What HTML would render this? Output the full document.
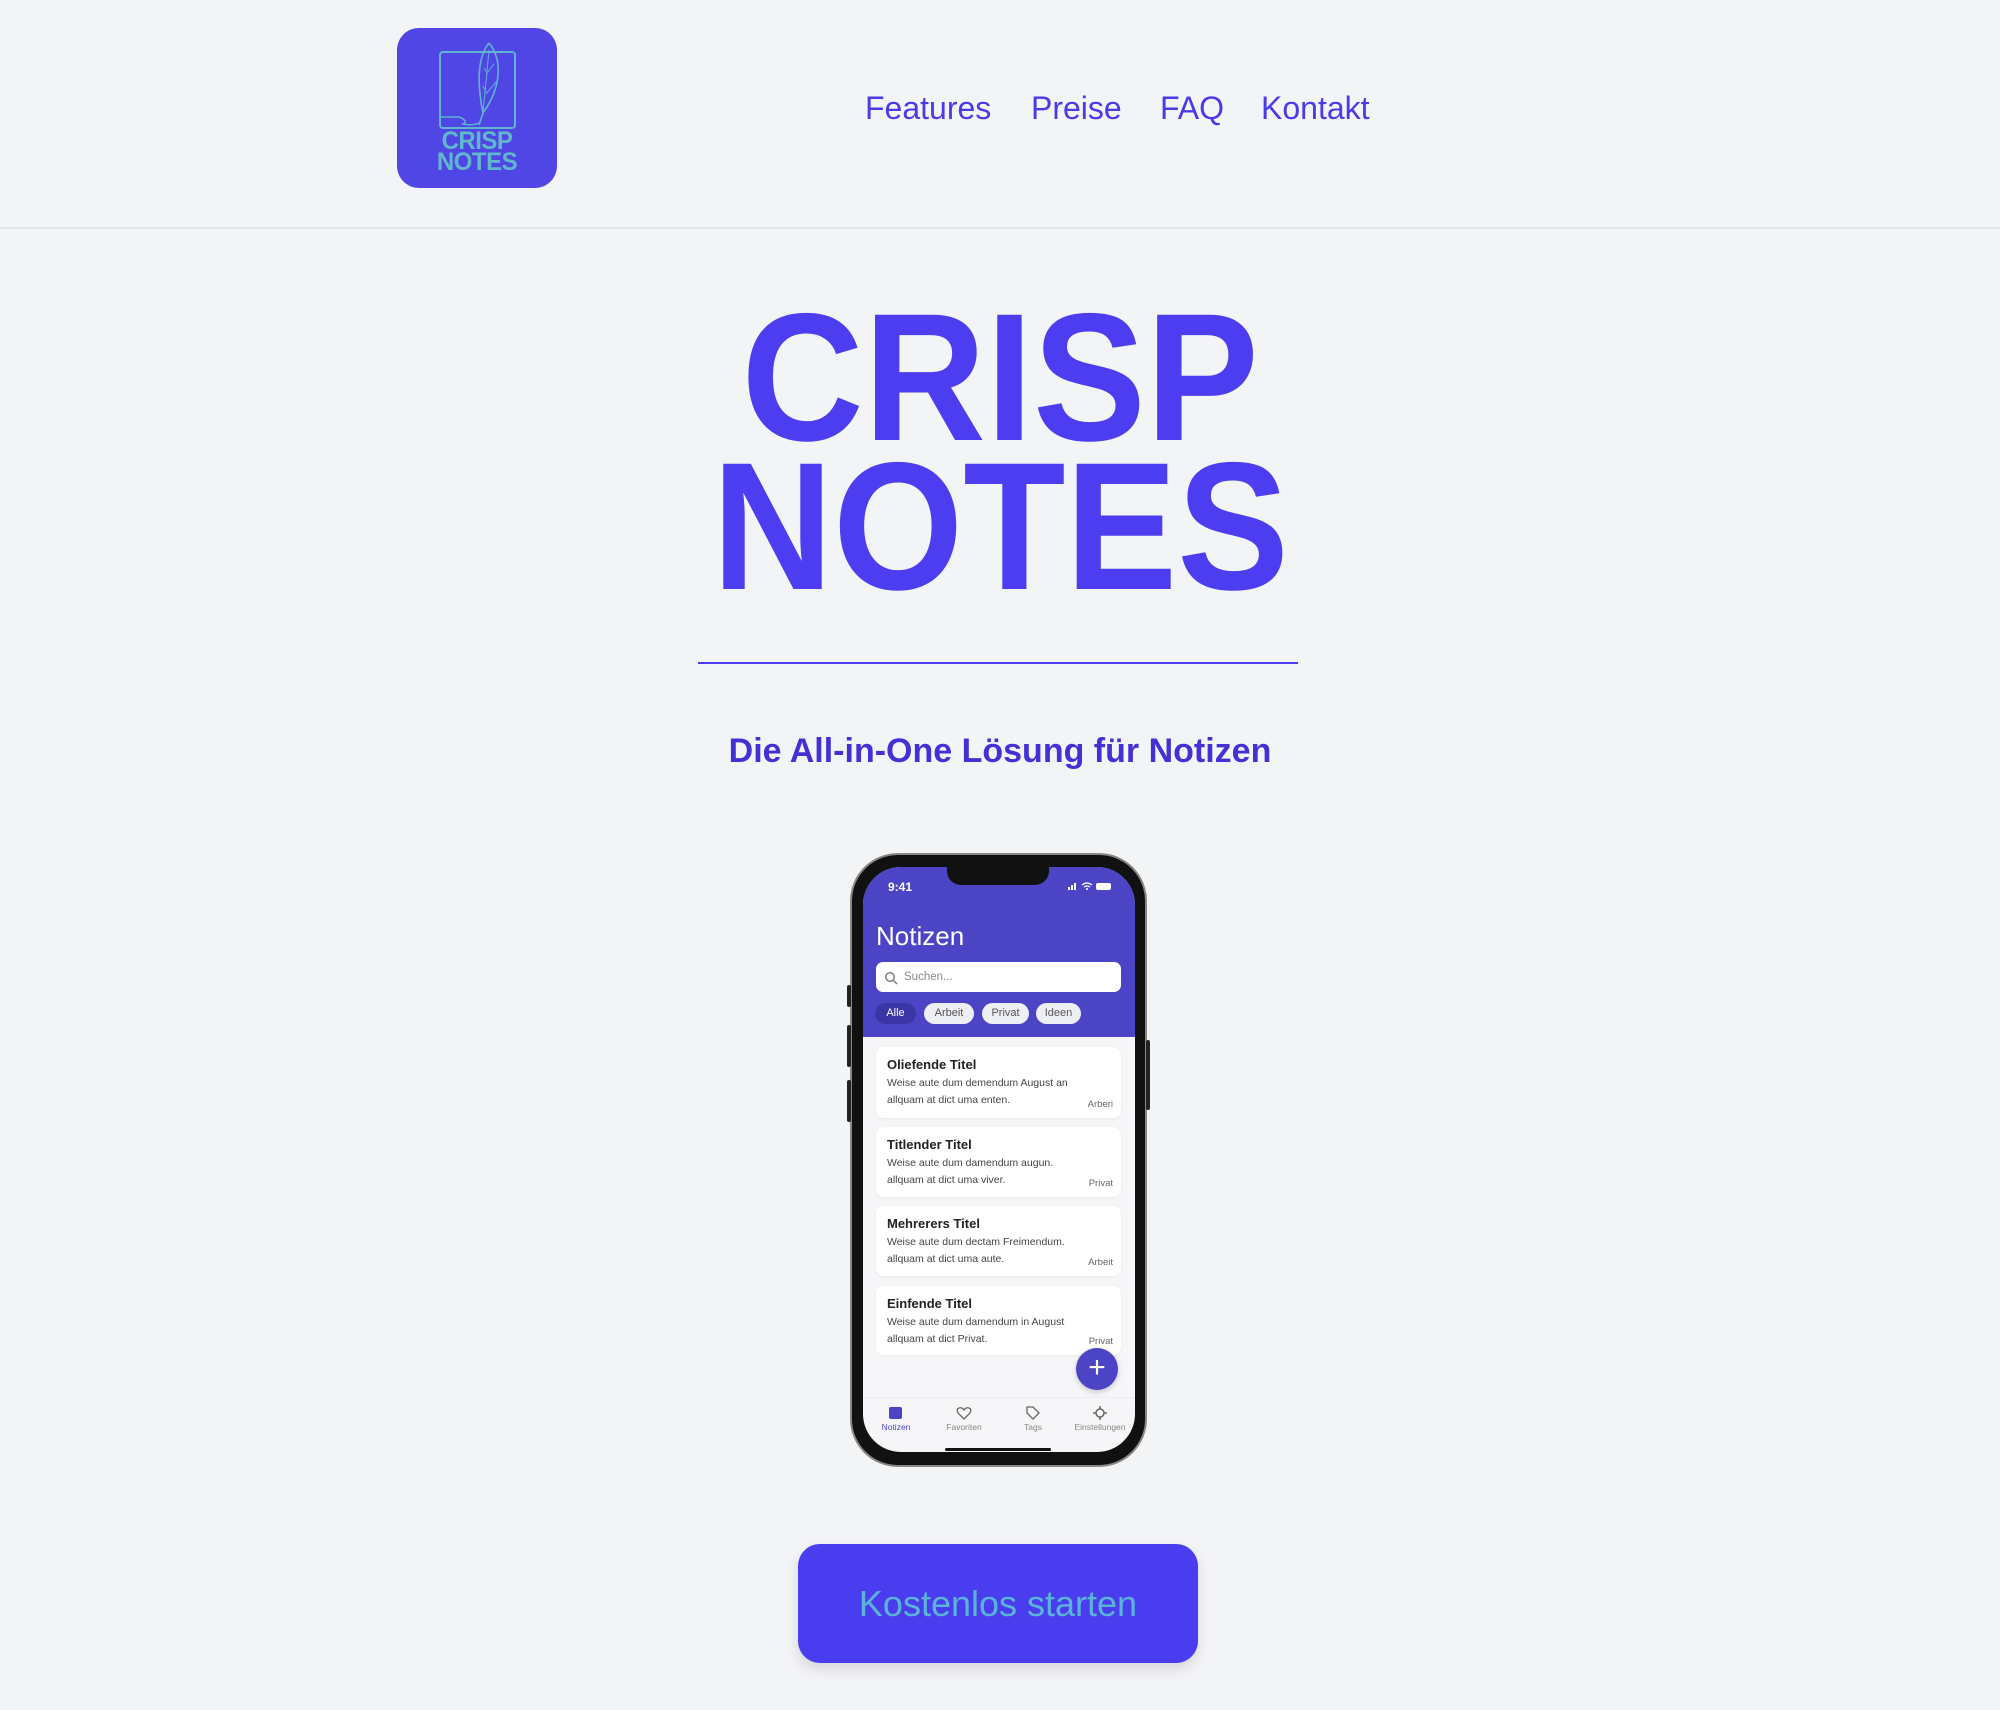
<!DOCTYPE html>
<html><head><meta charset="utf-8"><style>
*{margin:0;padding:0;box-sizing:border-box}
body{width:2000px;height:1710px;background:#f3f4f6;font-family:"Liberation Sans",sans-serif;position:relative;overflow:hidden}
.a{position:absolute}
.nav{top:90px;font-size:32px;color:#4a3ae8}
.t{left:0;width:2000px;text-align:center;color:#4c3ef0;font-weight:bold;font-size:182px;line-height:1;white-space:nowrap}
.t span{display:inline-block}
.card{position:absolute;left:876px;width:245px;background:#fff;border-radius:8px;box-shadow:0 1px 3px rgba(0,0,0,.06);padding:10px 11px 0 11px;color:#222}
.card b{display:block;font-size:13px;margin-bottom:3px}
.card p{font-size:10.5px;line-height:17px;color:#444}
.card i{position:absolute;right:8px;bottom:8px;font-style:normal;font-size:9.5px;color:#666}
.chip{position:absolute;top:1003px;height:21px;border-radius:11px;background:#eeeef5;color:#555;font-size:11px;text-align:center;line-height:21px}
.tab{position:absolute;top:1422px;font-size:8.5px;color:#888;text-align:center;width:80px}
</style></head><body>
<!-- header -->
<div class="a" style="left:397px;top:28px;width:160px;height:160px;background:#4f46e5;border-radius:22px">
<svg class="a" style="left:0;top:0" width="160" height="160" viewBox="0 0 160 160">
<rect x="43" y="24" width="75" height="76" rx="3" fill="none" stroke="#5fb4d0" stroke-width="2"/>
<path d="M92 15 C80 30 80 55 86 85 L82 97 M92 15 C106 32 104 60 86 85" fill="none" stroke="#5fb4d0" stroke-width="1.6"/>
<path d="M92 22 L86 85 M87 40 L91 46 M97 36 L91 44 M86 58 L89 64 M99 54 L89 66" fill="none" stroke="#5fb4d0" stroke-width="1"/>
<path d="M43 89 L62 89 Q72 93 66 96 Q76 98 82 95" fill="none" stroke="#5fb4d0" stroke-width="1.5"/>
</svg>
<div class="a" style="left:0;width:160px;top:104px;text-align:center;color:#5fb8cc;font-weight:bold;font-size:24px;line-height:20px;letter-spacing:-0.5px;transform:scaleY(1.05)">CRISP<br>NOTES</div>
</div>
<div class="a nav" style="left:865px">Features</div>
<div class="a nav" style="left:1031px">Preise</div>
<div class="a nav" style="left:1160px">FAQ</div>
<div class="a nav" style="left:1261px">Kontakt</div>
<div class="a" style="left:0;top:227px;width:2000px;height:2px;background:#e3e4e8"></div>
<!-- title -->
<div class="a t" style="top:286px"><span style="transform:scaleX(.93)">CRISP</span></div>
<div class="a t" style="top:435px"><span style="transform:scaleX(.92)">NOTES</span></div>
<div class="a" style="left:698px;top:662px;width:600px;height:2px;background:#4c3ef0"></div>
<div class="a" style="left:0;width:2000px;top:732px;text-align:center;font-weight:bold;font-size:34px;color:#4331d6">Die All-in-One Lösung für Notizen</div>
<!-- phone -->
<div class="a" style="left:850px;top:853px;width:297px;height:614px;border-radius:48px;background:#111;border:2px solid #888"></div>
<div class="a" style="left:847px;top:985px;width:4px;height:22px;background:#222;border-radius:2px"></div>
<div class="a" style="left:847px;top:1025px;width:4px;height:42px;background:#222;border-radius:2px"></div>
<div class="a" style="left:847px;top:1080px;width:4px;height:42px;background:#222;border-radius:2px"></div>
<div class="a" style="left:1146px;top:1040px;width:4px;height:70px;background:#222;border-radius:2px"></div>
<div class="a" style="left:863px;top:867px;width:272px;height:585px;border-radius:38px;background:#f6f6f9;overflow:hidden">
<div class="a" style="left:0;top:0;width:272px;height:170px;background:#4b45c6"></div>
<div class="a" style="left:84px;top:0;width:102px;height:18px;background:#111;border-radius:0 0 14px 14px"></div>
<div class="a" style="left:25px;top:13px;color:#fff;font-size:12px;font-weight:bold">9:41</div>
<svg class="a" style="left:205px;top:14px" width="50" height="10"><rect x="0" y="6" width="2" height="3" fill="#fff"/><rect x="3" y="4" width="2" height="5" fill="#fff"/><rect x="6" y="2" width="2" height="7" fill="#fff"/><path d="M14 4 Q19 0 24 4 M16 6 Q19 4 22 6" stroke="#fff" fill="none" stroke-width="1.3"/><circle cx="19" cy="8" r="1" fill="#fff"/><rect x="28" y="2" width="15" height="7" rx="2" fill="#fff"/></svg>
<div class="a" style="left:13px;top:54px;color:#fff;font-size:26px">Notizen</div>
<div class="a" style="left:13px;top:95px;width:245px;height:30px;background:#fff;border-radius:7px;color:#888;font-size:11.5px;line-height:30px;padding-left:28px">Suchen...</div>
<svg class="a" style="left:21px;top:104px" width="14" height="14"><circle cx="6" cy="6" r="4.3" stroke="#777" fill="none" stroke-width="1.4"/><path d="M9 9 L13 13" stroke="#777" stroke-width="1.4"/></svg>
</div>
<div class="chip" style="left:875px;width:41px;background:#3b36a8;color:#fff">Alle</div>
<div class="chip" style="left:924px;width:50px">Arbeit</div>
<div class="chip" style="left:982px;width:47px">Privat</div>
<div class="chip" style="left:1036px;width:45px">Ideen</div>
<div class="card" style="top:1047px;height:71px"><b>Oliefende Titel</b><p>Weise aute dum demendum August an<br>allquam at dict uma enten.</p><i>Arberi</i></div>
<div class="card" style="top:1127px;height:70px"><b>Titlender Titel</b><p>Weise aute dum damendum augun.<br>allquam at dict uma viver.</p><i>Privat</i></div>
<div class="card" style="top:1206px;height:70px"><b>Mehrerers Titel</b><p>Weise aute dum dectam Freimendum.<br>allquam at dict uma aute.</p><i>Arbeit</i></div>
<div class="card" style="top:1286px;height:69px"><b>Einfende Titel</b><p>Weise aute dum damendum in August<br>allquam at dict Privat.</p><i>Privat</i></div>
<div class="a" style="left:1076px;top:1348px;width:42px;height:42px;border-radius:50%;background:#4b45c6;color:#fff;font-size:30px;line-height:40px;text-align:center;box-shadow:0 2px 6px rgba(0,0,0,.2)">+</div>
<div class="a" style="left:863px;top:1397px;width:272px;height:1px;background:#ececf0"></div>
<div class="a" style="left:889px;top:1407px;width:13px;height:12px;background:#4b45c6;border-radius:2px"></div>
<svg class="a" style="left:956px;top:1406px" width="16" height="14"><path d="M8 13 L2 7 Q0 3 3 2 Q6 1 8 4 Q10 1 13 2 Q16 3 14 7 Z" fill="none" stroke="#666" stroke-width="1.3"/></svg>
<svg class="a" style="left:1025px;top:1405px" width="16" height="16"><path d="M2 2 L8 2 L14 8 L8 14 L2 8 Z" fill="none" stroke="#666" stroke-width="1.3"/></svg>
<svg class="a" style="left:1092px;top:1405px" width="16" height="16"><circle cx="8" cy="8" r="4" fill="none" stroke="#666" stroke-width="1.5"/><path d="M8 1 V4 M8 12 V15 M1 8 H4 M12 8 H15" stroke="#666" stroke-width="1.5"/></svg>
<div class="tab" style="left:856px;color:#4b45c6">Notizen</div>
<div class="tab" style="left:924px">Favoriten</div>
<div class="tab" style="left:993px">Tags</div>
<div class="tab" style="left:1060px">Einstellungen</div>
<div class="a" style="left:945px;top:1448px;width:106px;height:3px;background:#111;border-radius:2px"></div>
<!-- button -->
<div class="a" style="left:798px;top:1544px;width:400px;height:119px;background:#4a3df0;border-radius:22px;box-shadow:0 6px 14px rgba(0,0,0,.12);color:#5ab4d8;font-size:36px;text-align:center;line-height:119px">Kostenlos starten</div>
</body></html>
